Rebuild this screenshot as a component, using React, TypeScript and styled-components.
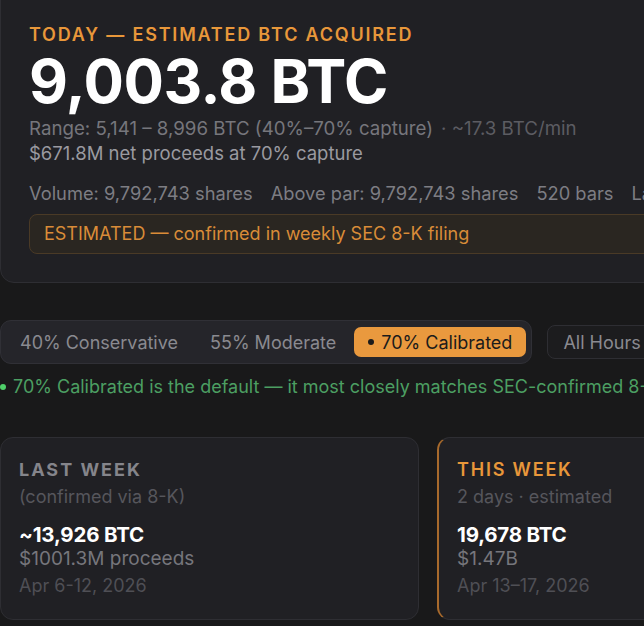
import React from "react";
import styled, { createGlobalStyle } from "styled-components";

const GlobalStyle = createGlobalStyle`
  html, body {
    margin: 0;
    padding: 0;
    background: #19191a;
    overflow: hidden;
  }
  body {
    font-family: Inter, "Noto Sans", sans-serif;
    color: #e8e8ea;
  }
`;

const Page = styled.div`
  width: 900px;
  display: flex;
  flex-direction: column;
`;

const HeroCard = styled.section`
  margin-top: -20px;
  padding: 43px 28px 28px 28px;
  background: #202024;
  border: 1px solid #2e2e33;
  border-radius: 14px;
`;

const Eyebrow = styled.div<{ $tone?: "orange" | "gray" }>`
  font-size: 18px;
  line-height: 22px;
  font-weight: ${(p) => (p.$tone === "gray" ? 700 : 600)};
  letter-spacing: ${(p) => (p.$tone === "gray" ? "2px" : "1.8px")};
  text-transform: uppercase;
  color: ${(p) => (p.$tone === "gray" ? "#85858b" : "#e8973a")};
`;

const BigNumber = styled.div`
  margin-top: 2px;
  font-size: 60px;
  font-weight: 700;
  line-height: 66px;
  letter-spacing: -0.5px;
  color: #ffffff;
`;

const RangeLine = styled.div`
  margin-top: 3px;
  font-size: 18.7px;
  line-height: 24px;
  color: #76767c;
  white-space: nowrap;
`;

const Dim = styled.span`
  margin-left: 8px;
  color: #5c5c62;
`;

const ProceedsLine = styled.div`
  font-size: 18.5px;
  line-height: 24px;
  color: #9a9aa0;
`;

const StatsRow = styled.div`
  margin-top: 16px;
  display: flex;
  gap: 18px;
  font-size: 18.3px;
  line-height: 24px;
  color: #7d7d83;
  white-space: nowrap;
`;

const Banner = styled.div`
  margin-top: 9px;
  padding: 9px 14px;
  background: #2a2621;
  border: 1px solid #4a3a26;
  border-radius: 8px;
  font-size: 18px;
  line-height: 20px;
  color: #d98c38;
`;

const Controls = styled.div`
  margin-top: 37px;
  display: flex;
  align-items: center;
  gap: 15px;
`;

const Segmented = styled.div`
  display: flex;
  align-items: center;
  gap: 4px;
  padding: 6px 5px;
  background: #25252a;
  border: 1px solid #303036;
  border-radius: 11px;
`;

const Segment = styled.button<{ $active?: boolean }>`
  display: flex;
  align-items: center;
  gap: 7px;
  height: 30px;
  padding: 0 14px;
  border: none;
  border-radius: 7px;
  font-family: inherit;
  font-size: 18px;
  background: ${(p) => (p.$active ? "#e9993e" : "transparent")};
  color: ${(p) => (p.$active ? "#1b1b1b" : "#8a8a90")};
`;

const Dot = styled.span<{ $color: string; $size: number }>`
  display: inline-block;
  flex: none;
  width: ${(p) => p.$size}px;
  height: ${(p) => p.$size}px;
  border-radius: 50%;
  background: ${(p) => p.$color};
`;

const OutlineButton = styled.button`
  height: 34px;
  padding: 0 15px;
  background: #1c1c1e;
  border: 1px solid #2e2e33;
  border-radius: 8px;
  font-family: inherit;
  font-size: 18px;
  color: #8a8a90;
`;

const Note = styled.div`
  margin-top: 12px;
  display: flex;
  align-items: center;
  gap: 7px;
  font-size: 18px;
  line-height: 22px;
  color: #4c9f62;
  white-space: nowrap;
`;

const WeekGrid = styled.div`
  margin-top: 39px;
  display: grid;
  grid-template-columns: 419px 419px;
  gap: 18px;
`;

const WeekCard = styled.div<{ $accent?: boolean }>`
  height: 183px;
  box-sizing: border-box;
  padding: 21px 18px;
  background: #202024;
  border: 1px solid #2e2e33;
  border-left: ${(p) => (p.$accent ? "2px solid #a86a2c" : "1px solid #2e2e33")};
  border-radius: 13px;
`;

const SubLabel = styled.div`
  margin-top: 5px;
  font-size: 18px;
  line-height: 22px;
  color: #56565c;
`;

const WeekValue = styled.div`
  margin-top: 15px;
  font-size: 20.5px;
  line-height: 24px;
  font-weight: 700;
  letter-spacing: -0.2px;
  color: #ffffff;
`;

const WeekMoney = styled.div`
  font-size: 19px;
  line-height: 24px;
  color: #76767c;
`;

const WeekDates = styled.div`
  margin-top: 4px;
  font-size: 18px;
  line-height: 22px;
  color: #4f4f55;
`;

export default function App() {
  return (
    <Page>
      <GlobalStyle />
      <HeroCard>
        <Eyebrow>Today — Estimated BTC Acquired</Eyebrow>
        <BigNumber>9,003.8 BTC</BigNumber>
        <RangeLine>
          Range: 5,141 – 8,996 BTC (40%–70% capture)<Dim>· ~17.3 BTC/min</Dim>
        </RangeLine>
        <ProceedsLine>$671.8M net proceeds at 70% capture</ProceedsLine>
        <StatsRow>
          <span>Volume: 9,792,743 shares</span>
          <span>Above par: 9,792,743 shares</span>
          <span>520 bars</span>
          <span>Last bar: 15:59</span>
        </StatsRow>
        <Banner>ESTIMATED — confirmed in weekly SEC 8-K filing</Banner>
      </HeroCard>

      <Controls>
        <Segmented>
          <Segment>40% Conservative</Segment>
          <Segment>55% Moderate</Segment>
          <Segment $active>
            <Dot $color="#1b1b1b" $size={6} />
            70% Calibrated
          </Segment>
        </Segmented>
        <OutlineButton>All Hours</OutlineButton>
      </Controls>

      <Note>
        <Dot $color="#4fd06a" $size={6} />
        70% Calibrated is the default — it most closely matches SEC-confirmed 8-K filings
      </Note>

      <WeekGrid>
        <WeekCard>
          <Eyebrow $tone="gray">Last Week</Eyebrow>
          <SubLabel>(confirmed via 8-K)</SubLabel>
          <WeekValue>~13,926 BTC</WeekValue>
          <WeekMoney>$1001.3M proceeds</WeekMoney>
          <WeekDates>Apr 6-12, 2026</WeekDates>
        </WeekCard>
        <WeekCard $accent>
          <Eyebrow>This Week</Eyebrow>
          <SubLabel>2 days · estimated</SubLabel>
          <WeekValue>19,678 BTC</WeekValue>
          <WeekMoney>$1.47B</WeekMoney>
          <WeekDates>Apr 13–17, 2026</WeekDates>
        </WeekCard>
      </WeekGrid>
    </Page>
  );
}
